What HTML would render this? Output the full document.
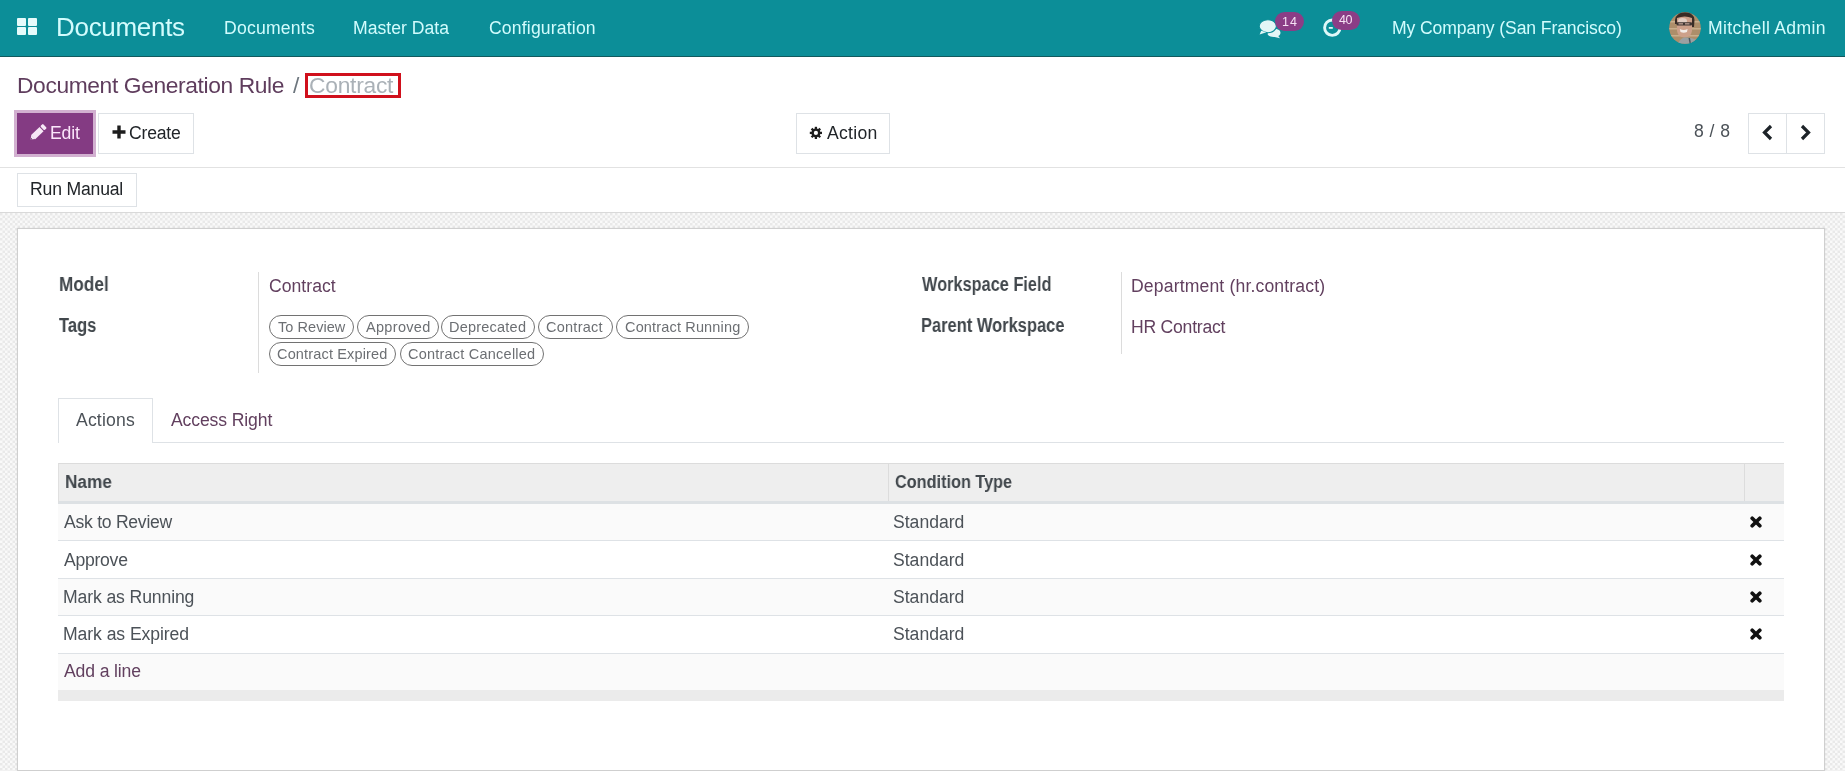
<!DOCTYPE html>
<html><head><meta charset="utf-8">
<style>
html,body{margin:0;padding:0;}
body{width:1845px;height:771px;overflow:hidden;position:relative;background:#fff;font-family:"Liberation Sans",sans-serif;}
.a{position:absolute;box-sizing:border-box;}
.t{position:absolute;white-space:nowrap;will-change:transform;font-family:"Liberation Sans",sans-serif;}
#nav{left:0;top:0;width:1845px;height:57px;background:#0c8e98;border-bottom:1px solid #115a5e;}
.sq{position:absolute;width:9px;height:8px;background:#e6fbfb;border-radius:1px;}
.badge{position:absolute;background:#8b3d86;border-radius:10px;}
.btn{position:absolute;box-sizing:border-box;border:1px solid #dee2e6;background:#fff;}
#hatch{left:0;top:212px;width:1845px;height:559px;border-top:1px solid #d9d9d9;
  background:#f3f3f3;overflow:hidden;}
#sheet{left:17px;top:228px;width:1808px;height:543px;background:#fff;border:1px solid #cfcfcf;box-shadow:0 0 2px rgba(0,0,0,.08);}
.sep{position:absolute;width:1px;background:#dcdcdc;}
.tag{position:absolute;box-sizing:border-box;height:23.5px;border:1.7px solid #727272;border-radius:12px;}
.hl{position:absolute;height:1px;background:#dee2e6;}
</style></head><body>
<div id="nav" class="a"></div>
<!-- apps grid icon -->
<div class="sq" style="left:17px;top:18px"></div>
<div class="sq" style="left:27.5px;top:18px"></div>
<div class="sq" style="left:17px;top:27px"></div>
<div class="sq" style="left:27.5px;top:27px"></div>
<!-- chat icon -->
<svg class="a" style="left:1257px;top:18px" width="26" height="21" viewBox="0 0 26 21">
  <path d="M12 10.5 C18 9.8 23.5 11.5 23.5 14.8 C23.5 16.3 22.6 17.4 21.3 18.1 L23 20.2 L17.6 18.9 C14.5 19.1 11.6 18 10.6 16.2 Z" fill="#e4f6f6"/>
  <ellipse cx="10.8" cy="8.2" rx="8.6" ry="6.5" fill="#e4f6f6" stroke="#0c8e98" stroke-width="1.1"/>
  <path d="M4.2 12.8 L2.6 16.6 L9.4 14.2 Z" fill="#e4f6f6"/>
</svg>
<div class="badge" style="left:1275.3px;top:12.1px;width:29.2px;height:19.4px"></div>
<!-- activity clock icon -->
<svg class="a" style="left:1322px;top:18px" width="21" height="20" viewBox="0 0 21 20">
  <circle cx="10.3" cy="9.7" r="7.7" fill="none" stroke="#dff8f8" stroke-width="2.9"/>
  <path d="M10.8 9.9 H6.8" fill="none" stroke="#dff8f8" stroke-width="1.8"/>
</svg>
<div class="badge" style="left:1331.8px;top:10.6px;width:28.1px;height:19.4px"></div>
<!-- avatar -->
<svg class="a" style="left:1669.2px;top:11.9px" width="32" height="32" viewBox="0 0 32 32">
  <defs><clipPath id="cc"><circle cx="16" cy="16" r="15.8"/></clipPath>
</defs>
  <g clip-path="url(#cc)"><g>
    <rect x="-2" y="-2" width="36" height="36" fill="#ad8e6a"/>
    <rect x="-2" y="9" width="36" height="1.5" fill="#c9ae8c"/>
    <rect x="-2" y="16" width="36" height="1.5" fill="#c9ae8c"/>
    <rect x="-2" y="23" width="36" height="1.5" fill="#c9ae8c"/>
    <rect x="-2" y="-2" width="36" height="4" fill="#6b5646"/>
    <path d="M6 8 Q7 0.5 16 0.5 Q25 0.5 25.5 8 L25 15 L23 15 L22 8 Q16 5 9 8 L8 12 L6 12Z" fill="#3a2c26"/>
    <path d="M8 6 Q16 3 23 6 L23 19 Q22 25 15.5 25.5 Q9 25 8 19Z" fill="#cda08a"/>
    <ellipse cx="13.5" cy="9" rx="4.5" ry="3" fill="#e2cdc2"/>
    <rect x="7.5" y="10.2" width="15.5" height="3.2" rx="1" fill="#3f3532"/>
    <rect x="9.5" y="11" width="4.5" height="1.6" fill="#a48a80"/>
    <rect x="16" y="11" width="4.5" height="1.6" fill="#a48a80"/>
    <path d="M10.8 17 Q14.7 19 18.6 17 L18 20 Q14.7 21.5 11.5 20Z" fill="#f3ece8"/>
    <path d="M8 33 Q12 25 16 25.5 Q22 25 28 28 L30 34Z" fill="#9aa0a2"/>
    <path d="M19.5 26 L21 34 L22.5 34 L21 26Z" fill="#4c5660"/>
  </g></g>
</svg>
<!-- red box -->
<div class="a" style="left:305px;top:73px;width:95.5px;height:25.2px;border:3px solid #d0101c;"></div>
<!-- edit button -->
<div class="a" style="left:14px;top:110px;width:82px;height:47px;background:#d2b0d0;"></div>
<div class="a" style="left:17px;top:113px;width:76px;height:41px;background:#843b83;"></div>
<svg class="a" style="left:28px;top:122px" width="20" height="20" viewBox="28 122 20 20">
  <g transform="translate(30.6 139.6) rotate(-44)">
    <path d="M0 0 L3.8 -2.9 L3.8 2.9 Z" fill="#f6e8f6"/>
    <rect x="3.6" y="-2.9" width="11.6" height="5.8" fill="#f6e8f6"/>
    <rect x="16.2" y="-2.9" width="3.6" height="5.8" rx="1" fill="#f6e8f6"/>
    <path d="M0.2 0 L1.6 -1 L1.6 1Z" fill="#5a3a5a"/>
  </g>
</svg>
<!-- create button -->
<div class="btn" style="left:98px;top:113px;width:96px;height:41px"></div>
<svg class="a" style="left:111.5px;top:125px" width="14" height="14" viewBox="0 0 14 14">
  <path d="M5.3 0.5 H8.7 V5.3 H13.5 V8.7 H8.7 V13.5 H5.3 V8.7 H0.5 V5.3 H5.3 Z" fill="#1d1d1d"/>
</svg>
<!-- action button -->
<div class="btn" style="left:796px;top:113px;width:94px;height:40.5px"></div>
<svg class="a" style="left:808px;top:125px" width="16" height="16" viewBox="808 125 16 16">
  <g fill="#1d1d1d" transform="translate(815.9 132.9)">
    <circle r="4.5"/>
    <rect x="-1.15" y="-6.1" width="2.3" height="12.2"/>
    <rect x="-1.15" y="-6.1" width="2.3" height="12.2" transform="rotate(45)"/>
    <rect x="-1.15" y="-6.1" width="2.3" height="12.2" transform="rotate(90)"/>
    <rect x="-1.15" y="-6.1" width="2.3" height="12.2" transform="rotate(135)"/>
  </g>
  <circle cx="815.9" cy="132.9" r="2.1" fill="#fff"/>
</svg>
<!-- pager -->
<div class="btn" style="left:1747.5px;top:113px;width:77.5px;height:40.5px"></div>
<div class="a" style="left:1786px;top:113px;width:1px;height:40.5px;background:#dee2e6"></div>
<svg class="a" style="left:1761px;top:124px" width="13" height="17" viewBox="0 0 13 17">
  <path d="M10 2 L3.5 8.5 L10 15" fill="none" stroke="#1d2328" stroke-width="3.2"/>
</svg>
<svg class="a" style="left:1798.5px;top:124px" width="13" height="17" viewBox="0 0 13 17">
  <path d="M3 2 L9.5 8.5 L3 15" fill="none" stroke="#1d2328" stroke-width="3.2"/>
</svg>
<!-- control panel bottom line -->
<div class="hl" style="left:0;top:167px;width:1845px;background:#e2e2e2"></div>
<!-- run manual -->
<div class="btn" style="left:17px;top:173px;width:120px;height:34px"></div>
<!-- hatched bg and sheet -->
<div id="hatch" class="a"><svg width="1845" height="560" style="position:absolute;left:0;top:0"><defs><pattern id="hp" width="5" height="5" patternUnits="userSpaceOnUse"><rect width="5" height="5" fill="#f9f9f9"/><rect width="2.5" height="2.5" fill="#e9e9e9"/><rect x="2.5" y="2.5" width="2.5" height="2.5" fill="#e9e9e9"/></pattern></defs><rect width="1845" height="560" fill="url(#hp)"/></svg></div>
<div id="sheet" class="a"></div>
<div class="sep" style="left:258px;top:272px;height:101px"></div>
<div class="sep" style="left:1121px;top:272px;height:82px"></div>
<div class="tag" style="left:269.1px;top:315.1px;width:85.4px"></div>
<div class="tag" style="left:356.9px;top:315.1px;width:81.8px"></div>
<div class="tag" style="left:441.2px;top:315.1px;width:94.2px"></div>
<div class="tag" style="left:538.1px;top:315.1px;width:74.6px"></div>
<div class="tag" style="left:616.3px;top:315.1px;width:132.4px"></div>
<div class="tag" style="left:269.1px;top:342.1px;width:127.4px"></div>
<div class="tag" style="left:400.0px;top:342.1px;width:143.6px"></div>
<!-- tabs -->
<div class="a" style="left:58px;top:398px;width:95px;height:45px;border:1px solid #dee2e6;border-bottom:none;background:#fff"></div>
<div class="hl" style="left:152px;top:442px;width:1632px"></div>
<!-- table -->
<div class="a" style="left:58px;top:463px;width:1726px;height:41px;background:#eeeeee;border-top:1px solid #dcdcdc;border-left:1px solid #e0e0e0;border-bottom:3px solid #dde1e4"></div>
<div class="a" style="left:888px;top:463px;width:1px;height:38px;background:#dcdcdc"></div>
<div class="a" style="left:1744px;top:463px;width:1px;height:38px;background:#dcdcdc"></div>
<div class="a" style="left:58px;top:504px;width:1726px;height:36px;background:#fafafa"></div>
<div class="hl" style="left:58px;top:540px;width:1726px"></div>
<div class="hl" style="left:58px;top:578px;width:1726px"></div>
<div class="a" style="left:58px;top:579px;width:1726px;height:36px;background:#fafafa"></div>
<div class="hl" style="left:58px;top:615px;width:1726px"></div>
<div class="hl" style="left:58px;top:653px;width:1726px"></div>
<div class="a" style="left:58px;top:654px;width:1726px;height:36px;background:#fafafa"></div>
<div class="a" style="left:58px;top:690px;width:1726px;height:10.5px;background:#ebebeb"></div>
<!-- x icons -->
<svg class="a" style="left:1749.5px;top:515.8px" width="12" height="12" viewBox="0 0 12 12"><path d="M2.2 2.2 L9.8 9.8 M9.8 2.2 L2.2 9.8" stroke="#111" stroke-width="3.7" stroke-linecap="round"/></svg>
<svg class="a" style="left:1749.5px;top:553.8px" width="12" height="12" viewBox="0 0 12 12"><path d="M2.2 2.2 L9.8 9.8 M9.8 2.2 L2.2 9.8" stroke="#111" stroke-width="3.7" stroke-linecap="round"/></svg>
<svg class="a" style="left:1749.5px;top:590.8px" width="12" height="12" viewBox="0 0 12 12"><path d="M2.2 2.2 L9.8 9.8 M9.8 2.2 L2.2 9.8" stroke="#111" stroke-width="3.7" stroke-linecap="round"/></svg>
<svg class="a" style="left:1749.5px;top:627.8px" width="12" height="12" viewBox="0 0 12 12"><path d="M2.2 2.2 L9.8 9.8 M9.8 2.2 L2.2 9.8" stroke="#111" stroke-width="3.7" stroke-linecap="round"/></svg>
<span class="t" style="left:55.60px;top:13.80px;font-size:26px;line-height:26px;letter-spacing:-0.300px;color:#d2fcfd;font-weight:400">Documents</span>
<span class="t" style="left:223.60px;top:19.70px;font-size:17.6px;line-height:17.6px;letter-spacing:0.225px;color:#d2fcfd;font-weight:400">Documents</span>
<span class="t" style="left:353.40px;top:19.70px;font-size:17.6px;line-height:17.6px;letter-spacing:0.020px;color:#d2fcfd;font-weight:400">Master Data</span>
<span class="t" style="left:489.20px;top:19.70px;font-size:17.6px;line-height:17.6px;letter-spacing:0.167px;color:#d2fcfd;font-weight:400">Configuration</span>
<span class="t" style="left:1392.40px;top:19.80px;font-size:17.6px;line-height:17.6px;letter-spacing:-0.112px;color:#d2fcfd;font-weight:400">My Company (San Francisco)</span>
<span class="t" style="left:1707.70px;top:19.80px;font-size:17.6px;line-height:17.6px;letter-spacing:0.308px;color:#d2fcfd;font-weight:400">Mitchell Admin</span>
<span class="t" style="left:1281.90px;top:16.20px;font-size:12.5px;line-height:12.5px;letter-spacing:1.000px;color:#f6e2f4;font-weight:400">14</span>
<span class="t" style="left:1339.00px;top:14.30px;font-size:12.5px;line-height:12.5px;letter-spacing:-0.400px;color:#f6e2f4;font-weight:400">40</span>
<span class="t" style="left:16.50px;top:73.70px;font-size:22.8px;line-height:22.8px;letter-spacing:-0.383px;color:#5f3d5d;font-weight:400">Document Generation Rule</span>
<span class="t" style="left:292.80px;top:73.70px;font-size:22.8px;line-height:22.8px;letter-spacing:0.000px;color:#6c757d;font-weight:400">/</span>
<span class="t" style="left:309.40px;top:73.70px;font-size:22.8px;line-height:22.8px;letter-spacing:-0.257px;color:#aab1b7;font-weight:400">Contract</span>
<span class="t" style="left:49.60px;top:124.60px;font-size:17.6px;line-height:17.6px;letter-spacing:-0.133px;color:#fbe6fb;font-weight:400">Edit</span>
<span class="t" style="left:129.40px;top:125.00px;font-size:17.6px;line-height:17.6px;letter-spacing:-0.200px;color:#212529;font-weight:400">Create</span>
<span class="t" style="left:826.60px;top:125.00px;font-size:17.6px;line-height:17.6px;letter-spacing:0.280px;color:#212529;font-weight:400">Action</span>
<span class="t" style="left:1693.60px;top:123.40px;font-size:17.6px;line-height:17.6px;letter-spacing:0.450px;color:#4c5258;font-weight:400">8 / 8</span>
<span class="t" style="left:29.90px;top:181.00px;font-size:17.6px;line-height:17.6px;letter-spacing:-0.178px;color:#212529;font-weight:400">Run Manual</span>
<span class="t" style="left:58.62px;top:274.60px;font-size:19.6px;line-height:19.6px;letter-spacing:0.000px;transform:scaleX(0.8778);transform-origin:0 0;color:#41474c;font-weight:700">Model</span>
<span class="t" style="left:59.30px;top:315.70px;font-size:19.6px;line-height:19.6px;letter-spacing:0.000px;transform:scaleX(0.8409);transform-origin:0 0;color:#41474c;font-weight:700">Tags</span>
<span class="t" style="left:921.70px;top:274.90px;font-size:19.6px;line-height:19.6px;letter-spacing:0.000px;transform:scaleX(0.8331);transform-origin:0 0;color:#41474c;font-weight:700">Workspace Field</span>
<span class="t" style="left:920.86px;top:315.70px;font-size:19.6px;line-height:19.6px;letter-spacing:0.000px;transform:scaleX(0.8408);transform-origin:0 0;color:#41474c;font-weight:700">Parent Workspace</span>
<span class="t" style="left:268.80px;top:277.90px;font-size:17.6px;line-height:17.6px;letter-spacing:0.029px;color:#62405f;font-weight:400">Contract</span>
<span class="t" style="left:1131.30px;top:277.90px;font-size:17.6px;line-height:17.6px;letter-spacing:0.148px;color:#62405f;font-weight:400">Department (hr.contract)</span>
<span class="t" style="left:1131.30px;top:319.10px;font-size:17.6px;line-height:17.6px;letter-spacing:-0.240px;color:#62405f;font-weight:400">HR Contract</span>
<span class="t" style="left:76.30px;top:412.30px;font-size:17.6px;line-height:17.6px;letter-spacing:0.167px;color:#4c5258;font-weight:400">Actions</span>
<span class="t" style="left:170.70px;top:412.30px;font-size:17.6px;line-height:17.6px;letter-spacing:-0.127px;color:#62405f;font-weight:400">Access Right</span>
<span class="t" style="left:64.88px;top:472.80px;font-size:18.8px;line-height:18.8px;letter-spacing:0.000px;transform:scaleX(0.9160);transform-origin:0 0;color:#41474c;font-weight:700">Name</span>
<span class="t" style="left:894.53px;top:472.80px;font-size:18.8px;line-height:18.8px;letter-spacing:0.000px;transform:scaleX(0.8657);transform-origin:0 0;color:#41474c;font-weight:700">Condition Type</span>
<span class="t" style="left:63.90px;top:513.60px;font-size:17.6px;line-height:17.6px;letter-spacing:-0.267px;color:#4c5258;font-weight:400">Ask to Review</span>
<span class="t" style="left:893.00px;top:513.60px;font-size:17.6px;line-height:17.6px;letter-spacing:0.000px;color:#4c5258;font-weight:400">Standard</span>
<span class="t" style="left:63.90px;top:551.90px;font-size:17.6px;line-height:17.6px;letter-spacing:-0.267px;color:#4c5258;font-weight:400">Approve</span>
<span class="t" style="left:893.00px;top:551.90px;font-size:17.6px;line-height:17.6px;letter-spacing:0.000px;color:#4c5258;font-weight:400">Standard</span>
<span class="t" style="left:62.90px;top:588.90px;font-size:17.6px;line-height:17.6px;letter-spacing:-0.114px;color:#4c5258;font-weight:400">Mark as Running</span>
<span class="t" style="left:893.00px;top:588.90px;font-size:17.6px;line-height:17.6px;letter-spacing:0.000px;color:#4c5258;font-weight:400">Standard</span>
<span class="t" style="left:62.90px;top:626.00px;font-size:17.6px;line-height:17.6px;letter-spacing:-0.071px;color:#4c5258;font-weight:400">Mark as Expired</span>
<span class="t" style="left:893.00px;top:626.00px;font-size:17.6px;line-height:17.6px;letter-spacing:0.000px;color:#4c5258;font-weight:400">Standard</span>
<span class="t" style="left:63.70px;top:663.30px;font-size:17.6px;line-height:17.6px;letter-spacing:-0.133px;color:#62405f;font-weight:400">Add a line</span>
<span class="t" style="left:278.30px;top:319.60px;font-size:14.5px;line-height:14.5px;letter-spacing:0.050px;color:#6c6f73;font-weight:400">To Review</span>
<span class="t" style="left:366.10px;top:319.60px;font-size:14.5px;line-height:14.5px;letter-spacing:0.314px;color:#6c6f73;font-weight:400">Approved</span>
<span class="t" style="left:449.40px;top:319.60px;font-size:14.5px;line-height:14.5px;letter-spacing:0.222px;color:#6c6f73;font-weight:400">Deprecated</span>
<span class="t" style="left:546.30px;top:319.60px;font-size:14.5px;line-height:14.5px;letter-spacing:0.257px;color:#6c6f73;font-weight:400">Contract</span>
<span class="t" style="left:624.50px;top:319.60px;font-size:14.5px;line-height:14.5px;letter-spacing:0.160px;color:#6c6f73;font-weight:400">Contract Running</span>
<span class="t" style="left:277.30px;top:346.60px;font-size:14.5px;line-height:14.5px;letter-spacing:0.160px;color:#6c6f73;font-weight:400">Contract Expired</span>
<span class="t" style="left:408.20px;top:346.60px;font-size:14.5px;line-height:14.5px;letter-spacing:0.224px;color:#6c6f73;font-weight:400">Contract Cancelled</span>
</body></html>
